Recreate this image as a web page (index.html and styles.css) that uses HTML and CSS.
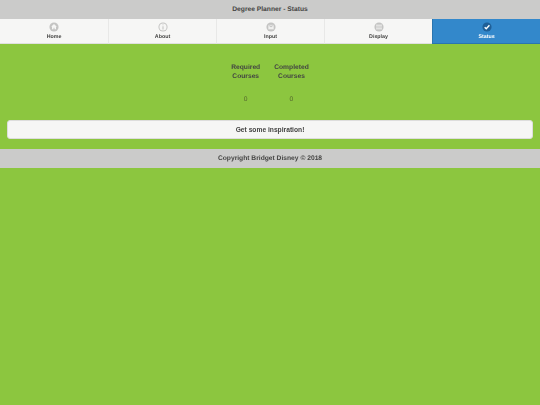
FILE: index.html
```html
<!DOCTYPE html>
<html lang="en">
<head>
<meta charset="utf-8">
<title>Degree Planner - Status</title>
<link rel="stylesheet" href="styles.css">
</head>
<body>
<div class="page">
<header class="bar header">Degree Planner - Status</header>
<nav class="nav">
  <a class="tab">
    <svg class="icon" viewBox="0 0 12 12"><circle cx="6" cy="6" r="5.500" fill="#c4c4c4"/><path d="M6 2.400 2.600 5.800h1v3h1.800V6.900h1.200v1.900h1.800v-3h1z" fill="#f6f6f6"/></svg>
    <span>Home</span>
  </a>
  <a class="tab">
    <svg class="icon" viewBox="0 0 12 12"><circle cx="6" cy="6" r="5.500" fill="#c4c4c4"/><circle cx="6" cy="6" r="4.300" fill="#f6f6f6"/><path d="M5.500 3h1v1h-1zM5.500 5h1v4h-1z" fill="#b4b4b4"/></svg>
    <span>About</span>
  </a>
  <a class="tab">
    <svg class="icon" viewBox="0 0 12 12"><circle cx="6" cy="6" r="5.500" fill="#c4c4c4"/><path d="M2.800 3.400h6.400v5.400H2.800z" fill="#f0f0f0"/><path d="M3 3.600 6 6l3-2.400M6 3.800v2" fill="none" stroke="#b8b8b8" stroke-width=".8"/></svg>
    <span>Input</span>
  </a>
  <a class="tab">
    <svg class="icon" viewBox="0 0 12 12"><circle cx="6" cy="6" r="5.500" fill="#c4c4c4"/><path d="M2.500 3.200h7v5.600h-7z" fill="#f0f0f0"/><path d="M2.500 5h7M2.500 7h7" stroke="#b8b8b8" stroke-width=".8"/></svg>
    <span>Display</span>
  </a>
  <a class="tab active">
    <svg class="icon" viewBox="0 0 12 12"><circle cx="6" cy="6" r="5.500" fill="#1f5f98"/><path d="M3.200 6.200 5.100 8 8.900 4" fill="none" stroke="#fff" stroke-width="1.700"/></svg>
    <span>Status</span>
  </a>
</nav>
<main class="content">
  <table class="counts">
    <thead>
      <tr><th>Required<br>Courses</th><th>Completed<br>Courses</th></tr>
    </thead>
    <tbody>
      <tr><td>0</td><td>0</td></tr>
    </tbody>
  </table>
  <button class="inspire" type="button">Get some inspiration!</button>
</main>
<footer class="bar footer">Copyright Bridget Disney © 2018</footer>
</div>
</body>
</html>
```
FILE: styles.css
```css
* { box-sizing: border-box; }
html, body { margin: 0; height: 100%; }
body {
  background: #8cc63f;
  font-family: "Liberation Sans", Arial, sans-serif;
  text-rendering: geometricPrecision;
  color: #444;
}
.page { opacity: 0.999; }
.bar {
  display: flex;
  align-items: center;
  justify-content: center;
  background: #cbcbcb;
  font-weight: 700;
  font-size: 6.700px;
  color: #444;
}
.header { height: 19px; padding-bottom: 1px; }
.footer { height: 19px; }
.nav { display: flex; height: 25px; }
.tab {
  width: 20%;
  display: flex;
  flex-direction: column;
  align-items: center;
  padding-top: 3px;
  gap: 1.500px;
  background: #f6f6f6;
  border-bottom: 1px solid #e0e0e0;
  font-size: 5.300px;
  font-weight: 700;
  line-height: 7px;
  color: #444;
}
.tab + .tab { border-left: 1px solid #e8e8e8; }
.tab.active {
  background: #3388cc;
  border-color: #2a75b0;
  color: #fff;
}
.icon { width: 10px; height: 10px; display: block; }
.content { padding: 19px 7px 10px; }
.counts {
  margin: 0 auto 14px;
  border-collapse: separate;
  border-spacing: 0;
  font-size: 6.700px;
  line-height: 9px;
  color: #444;
}
.counts th { font-weight: 700; padding: 0 7px; text-align: center; }
.counts td { padding: 12px 7px 0; text-align: center; font-weight: 400; height: 25px; color: #55672f; }
.inspire {
  display: block;
  width: 100%;
  height: 19px;
  padding-bottom: 2px;
  background: #f6f6f6;
  border: 1px solid #dddddd;
  border-radius: 3px;
  font: 700 6.700px "Liberation Sans", Arial, sans-serif;
  color: #444;
}
```
